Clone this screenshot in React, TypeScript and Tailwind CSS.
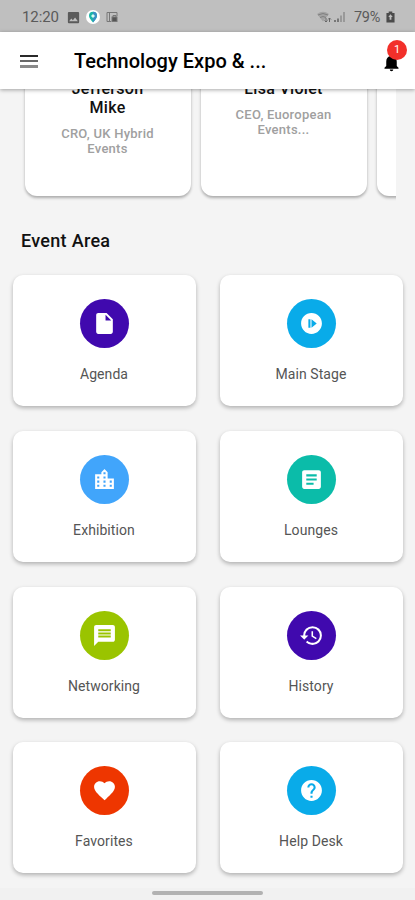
import React from 'react'
import {
  MdArticle,
  MdFavorite,
  MdHelp,
  MdHistory,
  MdInsertDriveFile,
  MdLocationCity,
  MdMessage,
  MdNotifications,
  MdNotStarted,
  MdPhoto,
} from 'react-icons/md'

type TSpeaker = {
  name: string[]
  role: string[]
}

type TArea = {
  title: string
  color: string
  Icon: React.ReactNode
}

const speakers: TSpeaker[] = [
  { name: ['Jefferson', 'Mike'], role: ['CRO, UK Hybrid', 'Events'] },
  { name: ['Lisa Violet'], role: ['CEO, Euoropean', 'Events...'] },
  { name: [], role: [] },
]

const areas: TArea[] = [
  { title: 'Agenda', color: 'bg-[#4009ae]', Icon: <MdInsertDriveFile /> },
  { title: 'Main Stage', color: 'bg-[#09abe9]', Icon: <MdNotStarted /> },
  { title: 'Exhibition', color: 'bg-[#41a5fb]', Icon: <MdLocationCity /> },
  { title: 'Lounges', color: 'bg-[#0bbca9]', Icon: <MdArticle /> },
  { title: 'Networking', color: 'bg-[#9ac400]', Icon: <MdMessage /> },
  { title: 'History', color: 'bg-[#4009ae]', Icon: <MdHistory /> },
  { title: 'Favorites', color: 'bg-[#ee3600]', Icon: <MdFavorite /> },
  { title: 'Help Desk', color: 'bg-[#09abe9]', Icon: <MdHelp /> },
]

const StatusBar = () => (
  <div className="flex h-8 shrink-0 items-center justify-between bg-[#bfbfbf] pr-5 pl-[22px] text-[14px] text-[#5a5a5a]">
    <div className="flex items-center pt-0.5">
      <span className="w-11 text-[15px] tracking-[-0.1px]">12:20</span>
      <MdPhoto className="size-[15px]" />
      <span className="ml-[5px] flex size-[14px] items-center justify-center rounded-full bg-white">
        <svg viewBox="0 0 12 12" className="size-[12px]">
          <path d="M6 .8a4 4 0 0 0-4 4C2 7.500 6 11.400 6 11.400s4-3.900 4-6.600a4 4 0 0 0-4-4z" fill="#1cb5a6" />
          <path d="M6 .8a4 4 0 0 1 4 4C10 7.500 6 11.400 6 11.400z" fill="#3b8fc4" />
          <path d="M6 3 8 5 6 7 4 5z" fill="#d8fff2" />
        </svg>
      </span>
      <svg viewBox="0 0 12 12" className="ml-[6px] size-[12px]" fill="none" stroke="#777">
        <path d="M11 5V1.500H1V10.500H5M3.500 1.500V10" />
        <rect x="6" y="6" width="5" height="4.500" fill="#555" />
        <path d="M7 6V4.500h3V6" />
      </svg>
    </div>
    <div className="flex items-center pt-0.5">
      <svg viewBox="0 0 16 12" className="h-3 w-4">
        <path d="M1 3Q7 -1.500 13 3L7 10.500z" fill="#a3a3a3" />
        <path d="M2 4Q7 1 12 4M4 6.500Q7 4.500 10 6.500" fill="none" stroke="#808080" />
        <path d="M10 7v4M8.500 9.500 10 11l1.500-1.500M13.500 11V7M12 8.500 13.500 7 15 8.500" fill="none" stroke="#666" />
      </svg>
      <svg viewBox="0 0 12 12" className="ml-[2px] size-3">
        <path d="M0 11V9h2v2zM3 11V7.500h2V11z" fill="#777" />
        <path d="M6 11V4.500h2V11zM9 11V1h2v10z" fill="#999" />
      </svg>
      <span className="ml-[8px] w-[28px] pt-px text-[14.5px] tracking-[-0.3px]">79%</span>
      <svg viewBox="0 0 10 12" className="ml-[4px] h-3 w-[9px]">
        <path d="M3 0h4v1.500h2.500V12h-9V1.500H3z" fill="#4b4b4b" />
        <path d="M5 3 2.500 6h1.500v3h2V6h1.500z" fill="#bfbfbf" />
      </svg>
    </div>
  </div>
)

const Header = () => (
  <header className="z-10 flex h-[57px] shrink-0 items-center bg-white pr-[13px] pl-5 shadow-[0_1px_4px_rgba(0,0,0,0.35)]">
    <div className="flex w-[18px] flex-col gap-[3px] pt-px">
      <span className="h-[2px] bg-[#2a2a2a]" />
      <span className="h-[2px] bg-[#686868]" />
      <span className="h-[3px] bg-[#8a8a8a]" />
    </div>
    <h1 className="ml-9 flex-1 text-[20px] font-medium tracking-[0.02px] text-black">
      Technology Expo &amp; ...
    </h1>
    <div className="relative">
      <MdNotifications className="relative top-[2px] size-[21px] text-black" />
      <span className="absolute -top-[10px] left-[6px] flex size-5 items-center justify-center rounded-full bg-[#f2302a] text-[11px] text-white">
        1
      </span>
    </div>
  </header>
)

const SpeakerCard = ({ name, role }: TSpeaker) => (
  <li className="h-[172px] w-[166px] shrink-0 rounded-xl bg-white pt-[55px] text-center shadow-[0_2px_3px_rgba(0,0,0,0.3)]">
    {name.map(line => (
      <p key={line} className="text-[16px] leading-[19px] font-medium tracking-[0.3px] text-[#111]">
        {line}
      </p>
    ))}
    <div className="mt-[9px] text-[13px] leading-[15px] font-medium tracking-[0.25px] text-[#a0a0a0]">
      {role.map(line => (
        <p key={line}>{line}</p>
      ))}
    </div>
  </li>
)

const AreaCard = ({ title, color, Icon }: TArea) => (
  <li className="flex h-[131px] flex-col items-center rounded-[10px] bg-white pt-6 shadow-[0_2px_4px_rgba(0,0,0,0.28)]">
    <span className={`${color} flex size-[49px] items-center justify-center rounded-full text-[25px] text-white`}>
      {Icon}
    </span>
    <span className="mt-4 text-[14px] leading-5 tracking-[0.08px] text-[#555]">{title}</span>
  </li>
)

const App = () => (
  <div className="flex h-[900px] w-[415px] flex-col overflow-hidden bg-[#f4f4f4] font-['Roboto',sans-serif]">
    <StatusBar />
    <Header />
    <main className="flex flex-1 flex-col">
      <ul className="mr-[19px] flex h-[113px] shrink-0 items-end gap-[10px] overflow-hidden pb-[6px] pl-[24.5px]">
        {speakers.map((speaker, i) => (
          <SpeakerCard {...speaker} key={i} />
        ))}
      </ul>
      <h2 className="mt-[27px] ml-[21px] text-[18px] leading-6 font-medium tracking-[0.3px] text-[#111]">
        Event Area
      </h2>
      <ul className="mt-[22px] grid grid-cols-2 gap-x-6 gap-y-[24.8px] px-[12.5px]">
        {areas.map(area => (
          <AreaCard {...area} key={area.title} />
        ))}
      </ul>
    </main>
    <div className="flex h-3 shrink-0 items-start justify-center bg-[#f1f1f1] pt-[3px]">
      <span className="h-1 w-[111px] rounded-full bg-[#b2b2b2]" />
    </div>
  </div>
)

export default App
